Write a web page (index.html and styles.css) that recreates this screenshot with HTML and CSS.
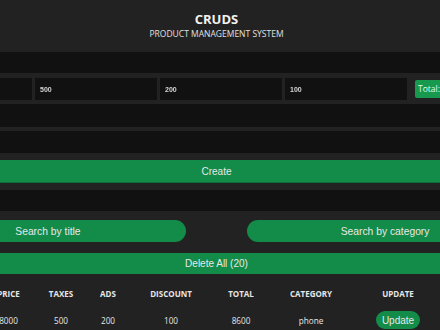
FILE: index.html
```html
<!DOCTYPE html>
<html>
<head lang="en">
    <meta charset="UTF-8">
    <title>CRUDS</title>
    <link rel="stylesheet" href="styles.css">
</head>
<body>
<div class="crud">
    <div class="head">
        <h2>CRUDS</h2>
        <p>PRODUCT MANAGEMENT SYSTEM</p>
    </div>
    <div class="inputs">
        <input type="text" class="field title" id="title">
        <div class="price">
            <input type="number" class="cell" id="price" value="">
            <input type="number" class="cell" id="taxes" value="500">
            <input type="number" class="cell" id="ads" value="200">
            <input type="number" class="cell" id="discount" value="100">
            <small id="total">Total:</small>
        </div>
        <input type="number" class="field count" id="count">
        <input type="text" class="field category" id="category">
        <button class="create" id="submit">Create</button>
    </div>
    <div class="outputs">
        <input type="text" class="field search" id="search">
        <div class="searchBlock">
            <button class="pill">Search by title</button>
            <button class="pill">Search by category</button>
        </div>
        <div id="deleteAll"><button class="delete">Delete All (20)</button></div>
        <table>
            <colgroup>
                <col class="c-id"><col class="c-title"><col class="c-price"><col class="c-taxes">
                <col class="c-ads"><col class="c-discount"><col class="c-total"><col class="c-cat">
                <col class="c-update"><col class="c-delete">
            </colgroup>
            <tr>
                <th>ID</th><th>TITLE</th><th>PRICE</th><th>TAXES</th><th>ADS</th>
                <th>DISCOUNT</th><th>TOTAL</th><th>CATEGORY</th><th>UPDATE</th><th>DELETE</th>
            </tr>
            <tr>
                <td>1</td><td>iphone</td><td>8000</td><td>500</td><td>200</td>
                <td>100</td><td>8600</td><td>phone</td>
                <td><button class="small">Update</button></td>
                <td><button class="small">Delete</button></td>
            </tr>
        </table>
    </div>
</div>
</body>
</html>
```

FILE: styles.css
```css
* {
    padding: 0;
    margin: 0;
    box-sizing: border-box;
}

body {
    background: #222;
    color: #ddd;
    overflow: hidden;
    font-family: "Open Sans", "Noto Sans", sans-serif;
}

.crud {
    width: 613px;
    margin-left: -90px;
}

.head {
    height: 52px;
    text-align: center;
    padding-top: 10px;
}

.head h2 {
    font-size: 13px;
    font-weight: 700;
    line-height: 18px;
    color: #f2f2f2;
}

.head p {
    font-size: 8.5px;
    line-height: 11px;
    color: #e0e0e0;
}

input {
    border: 0;
    outline: none;
    background: #111;
    color: #d6d6d6;
    font-family: "Liberation Sans", Arial, sans-serif;
    font-size: 7px;
    font-weight: 700;
    padding: 0 5px;
}

input::-webkit-outer-spin-button,
input::-webkit-inner-spin-button {
    -webkit-appearance: none;
}

.field {
    display: block;
    width: 100%;
    height: 22px;
}

.title {
    height: 21px;
}

.price {
    display: flex;
    align-items: center;
    gap: 3px;
    height: 22px;
    margin-top: 5px;
}

.price .cell {
    width: 122px;
    height: 22px;
    will-change: transform;
}

#total {
    margin-left: 5px;
    height: 18px;
    line-height: 18px;
    padding: 0 3px;
    width: 60px;
    background: #17994e;
    border-radius: 2px;
    color: #dfe;
    font-size: 8.5px;
}

.count {
    margin-top: 4px;
    height: 23px;
}

.category {
    margin-top: 4px;
}

button {
    border: 0;
    cursor: pointer;
    background: #128c48;
    color: #e8e8e8;
    font-family: "Liberation Sans", Arial, sans-serif;
    font-size: 10px;
}

.create {
    display: block;
    width: 100%;
    height: 23px;
    margin-top: 7px;
    border-bottom: 1px solid #0e6e38;
}

.outputs {
    margin-top: 7px;
}

.search {
    height: 21px;
}

.searchBlock {
    display: flex;
    justify-content: space-between;
    margin-top: 9px;
}

.pill {
    width: 45%;
    height: 22px;
    border-radius: 11px;
    font-size: 10.3px;
}

.delete {
    display: block;
    width: 100%;
    height: 21px;
    margin-top: 11px;
}

table {
    width: 100%;
    table-layout: fixed;
    border-collapse: collapse;
    margin-top: 6px;
    text-align: center;
    color: #e6e6e6;
}

th {
    height: 26px;
    font-size: 8px;
    font-weight: 700;
}

td {
    height: 28px;
    font-size: 8.2px;
}

.c-id { width: 26px; }
.c-title { width: 45px; }
.c-price { width: 55px; }
.c-taxes { width: 50px; }
.c-ads { width: 44px; }
.c-discount { width: 82px; }
.c-total { width: 58px; }
.c-cat { width: 82px; }
.c-update { width: 92px; }
.c-delete { width: 79px; }

.small {
    height: 18px;
    padding: 0 6px;
    border-radius: 9px;
    font-size: 10px;
}
```
